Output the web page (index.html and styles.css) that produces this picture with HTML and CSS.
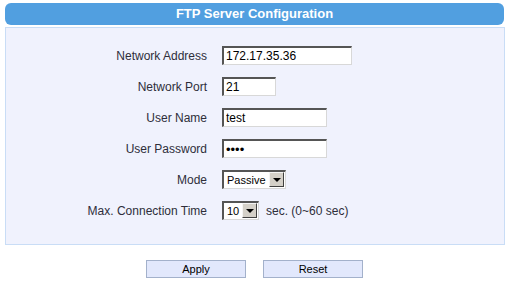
FILE: index.html
```html
<!DOCTYPE html>
<html lang="en">
<head>
  <meta charset="UTF-8">
  <title>FTP Server Configuration</title>
  <link rel="stylesheet" href="styles.css">
</head>
<body>
  <div class="page">
    <div class="title">FTP Server Configuration</div>
    <div class="panel">
      <div class="form">
        <label for="addr">Network Address</label>
        <div><input type="text" id="addr" class="w-addr" value="172.17.35.36"></div>

        <label for="port">Network Port</label>
        <div><input type="text" id="port" class="w-port" value="21"></div>

        <label for="user">User Name</label>
        <div><input type="text" id="user" class="w-user" value="test"></div>

        <label for="pass">User Password</label>
        <div><input type="password" id="pass" class="w-user" value="test"></div>

        <label for="mode">Mode</label>
        <div>
          <span class="select w-mode">
            <select id="mode">
              <option>Passive</option>
              <option>Active</option>
            </select>
            <span class="arrow"></span>
          </span>
        </div>

        <label for="time">Max. Connection Time</label>
        <div class="inline">
          <span class="select w-time">
            <select id="time">
              <option>10</option>
              <option>20</option>
              <option>30</option>
            </select>
            <span class="arrow"></span>
          </span>
          <span class="hint">sec. (0~60 sec)</span>
        </div>
      </div>
    </div>

    <div class="buttons">
      <button type="button">Apply</button>
      <button type="button">Reset</button>
    </div>
  </div>
</body>
</html>
```

FILE: styles.css
```css
body {
  margin: 0;
  font-family: "Liberation Sans", Arial, sans-serif;
  background: #fff;
}

.page {
  padding: 3px 2px 0 5px;
}

.title {
  height: 22px;
  line-height: 22px;
  background: #519fe0;
  border-radius: 6px;
  color: #fff;
  font-weight: bold;
  font-size: 13px;
  text-align: center;
  margin-right: 1px;
}

.panel {
  margin-top: 2px;
  height: 216px;
  border: 1px solid #c9ddf6;
  background: #f0f2fd;
}

.form {
  display: grid;
  grid-template-columns: 201px auto;
  grid-auto-rows: 31px;
  column-gap: 15px;
  align-items: center;
  padding-top: 12px;
}

.form label {
  text-align: right;
  font-size: 12px;
  color: #2e2e3a;
}

.form > div {
  display: flex;
  align-items: center;
}

input {
  box-sizing: border-box;
  height: 19px;
  padding: 0 2px;
  border-style: solid;
  border-width: 2px 1px 1px 2px;
  border-color: #555 #d8d8d8 #d8d8d8 #555;
  background: #fff;
  font-family: "Liberation Sans", Arial, sans-serif;
  font-size: 12px;
  color: #000;
  outline: none;
}

input[type="password"] {
  font-size: 13px;
  letter-spacing: 0;
}

.w-addr { width: 130px; }
.w-port { width: 54px; }
.w-user { width: 105px; }

.select {
  position: relative;
  display: inline-block;
  height: 19px;
}

.select select {
  appearance: none;
  -webkit-appearance: none;
  box-sizing: border-box;
  width: 100%;
  height: 19px;
  padding: 0 0 0 3px;
  border-style: solid;
  border-width: 2px 1px 1px 2px;
  border-color: #555 #d8d8d8 #d8d8d8 #555;
  border-radius: 0;
  background: #fff;
  font-family: "Liberation Sans", Arial, sans-serif;
  font-size: 11px;
  color: #000;
  outline: none;
}

.select .arrow {
  position: absolute;
  top: 2px;
  right: 2px;
  width: 15px;
  height: 15px;
  box-sizing: border-box;
  background: #d4d0c8;
  border-style: solid;
  border-width: 1px;
  border-color: #f4f4f4 #404040 #404040 #f4f4f4;
  pointer-events: none;
}

.select .arrow::after {
  content: "";
  position: absolute;
  left: 3px;
  top: 5px;
  border-left: 4px solid transparent;
  border-right: 4px solid transparent;
  border-top: 4px solid #000;
}

.w-mode { width: 64px; }
.w-time { width: 37px; }

.hint {
  margin-left: 7px;
  font-size: 12px;
  color: #2e2e3a;
}

.buttons {
  display: flex;
  justify-content: center;
  gap: 17px;
  margin-top: 15px;
  padding-right: 1px;
}

.buttons button {
  width: 100px;
  height: 18px;
  padding: 0;
  border: 1px solid #a3b1cb;
  background: #e2e8fc;
  font-family: "Liberation Sans", Arial, sans-serif;
  font-size: 11px;
  color: #000;
}
```
